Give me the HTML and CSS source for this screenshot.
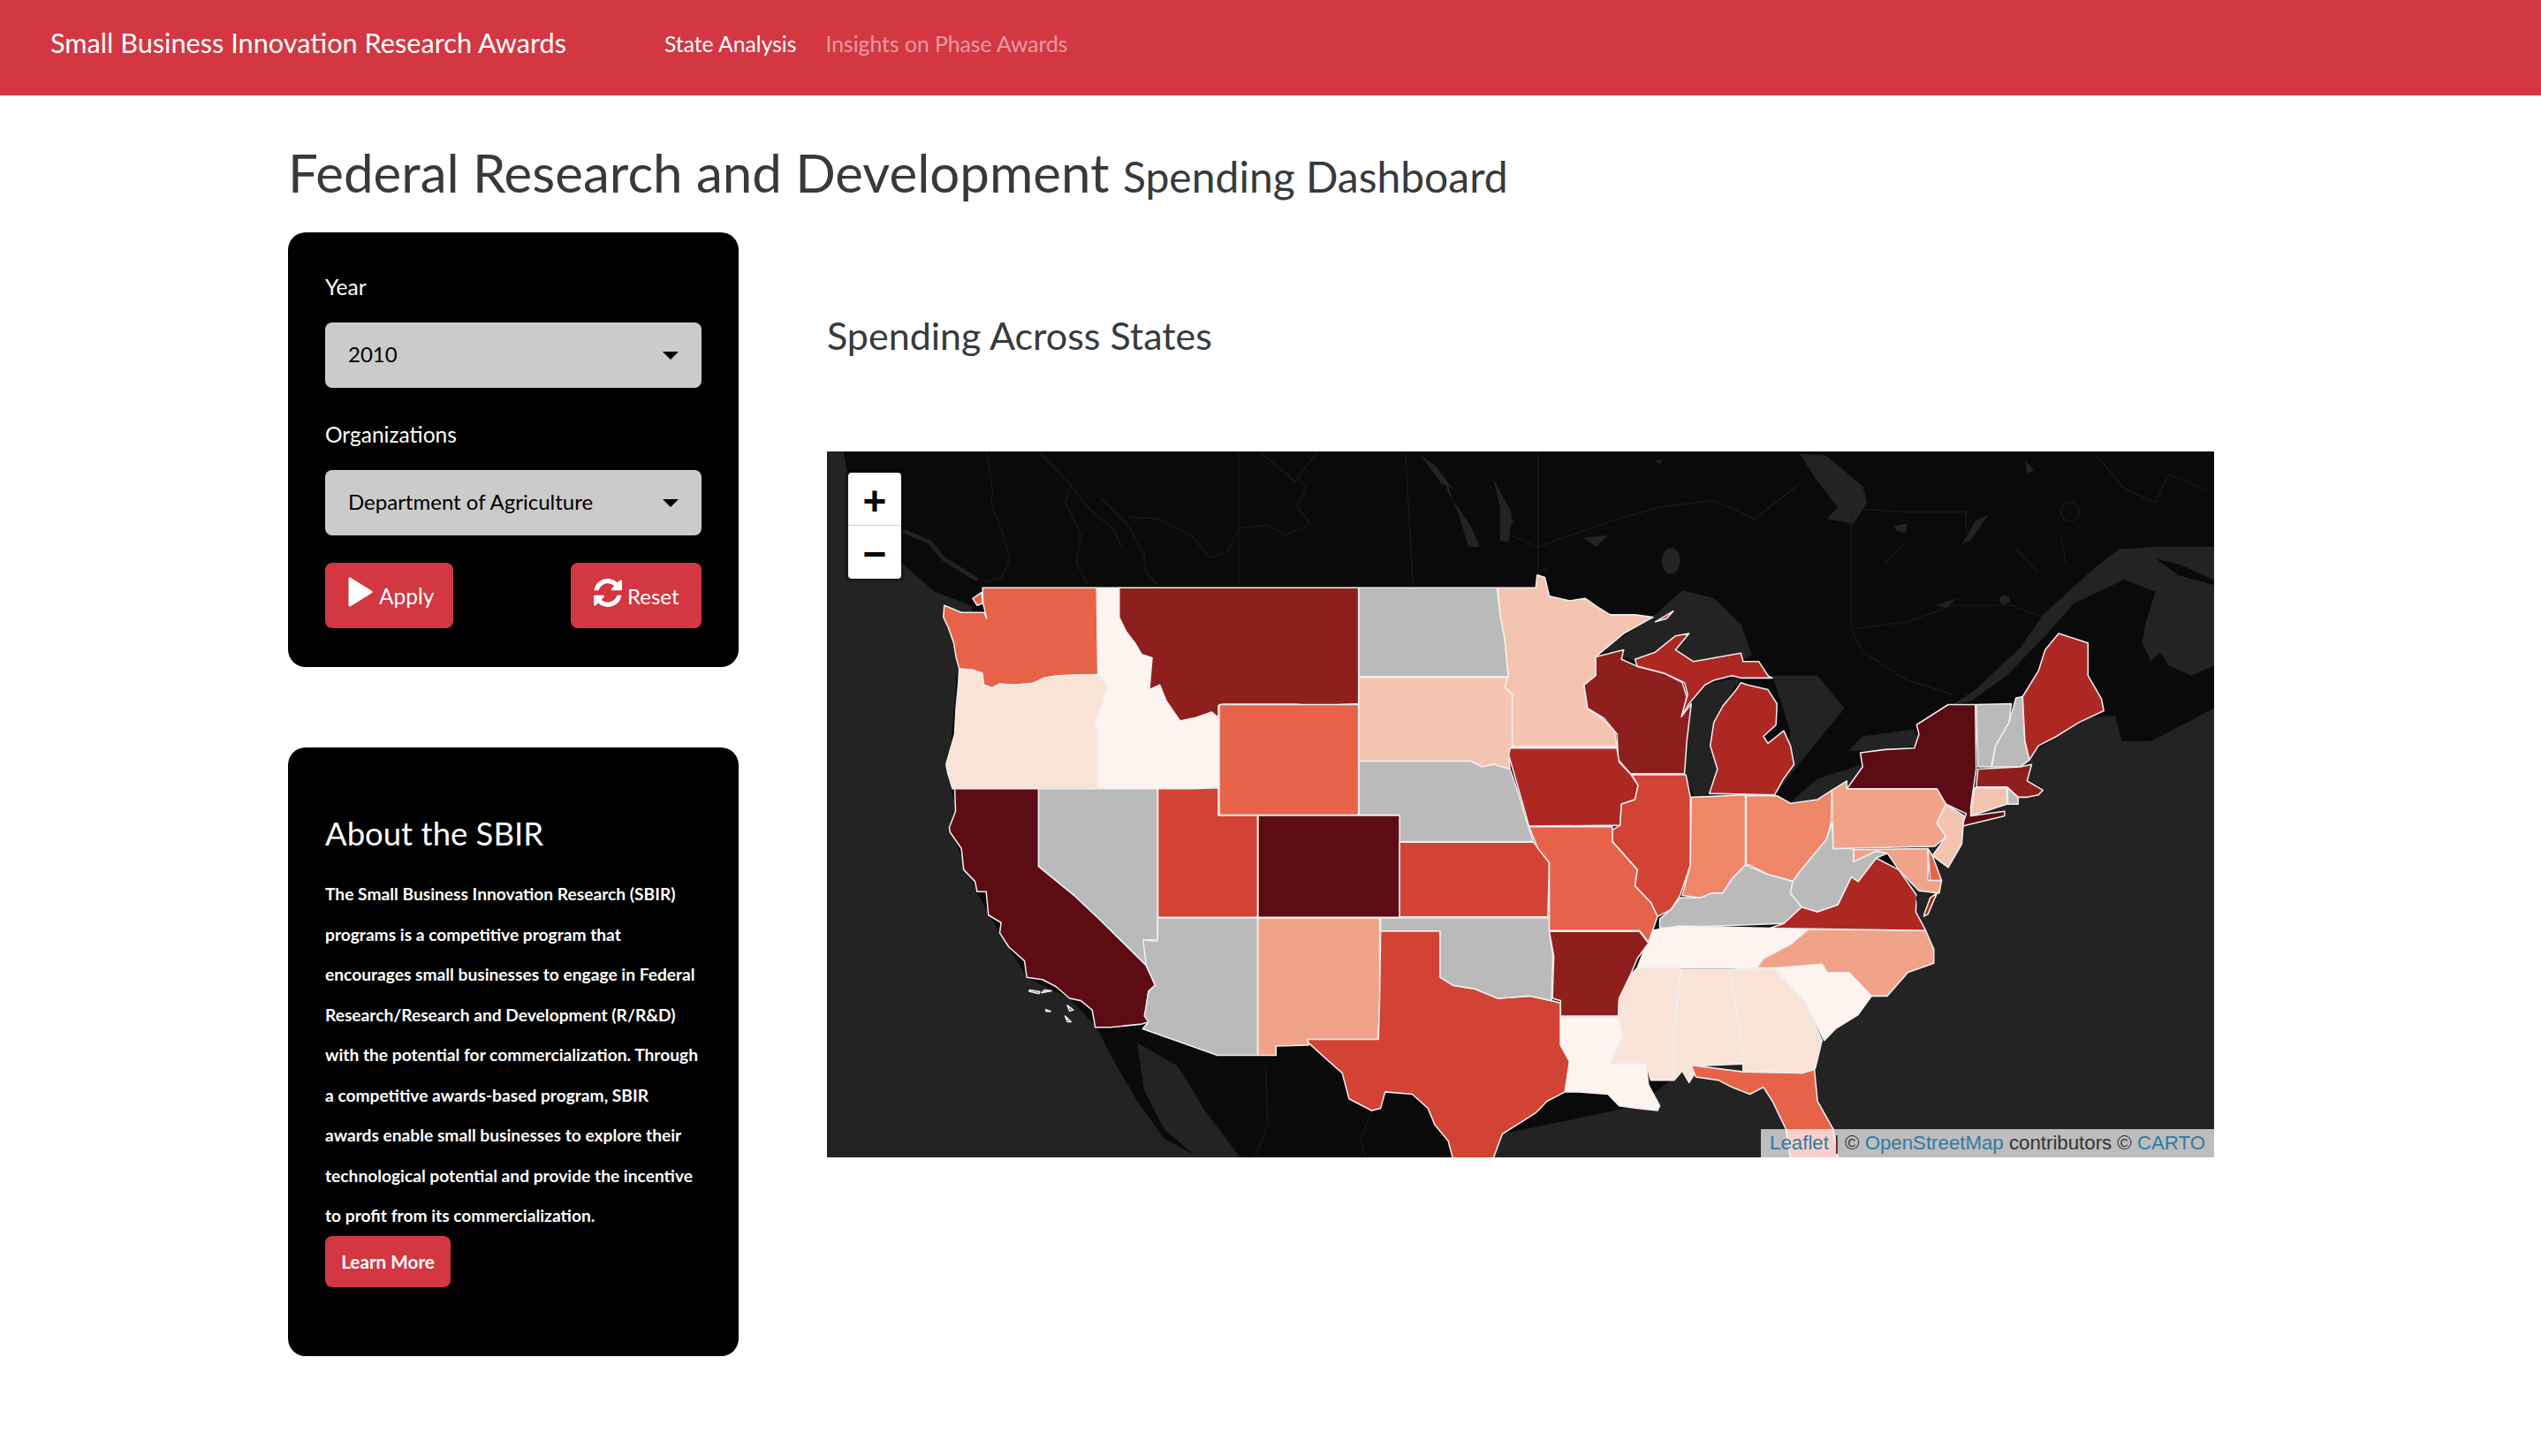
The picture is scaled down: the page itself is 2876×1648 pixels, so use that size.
FILE: index.html
```html
<!DOCTYPE html>
<html lang="en">
<head>
    <meta charset="UTF-8">
    <meta name="viewport" content="width=device-width, initial-scale=1.0">
    <title>Small Business Innovation Research Awards</title>
    <link rel="stylesheet" href="styles.css">
</head>
<body>
    <nav class="navbar">
        <a class="brand" href="#">Small Business Innovation Research Awards</a>
        <a class="nav-link active" href="#">State Analysis</a>
        <a class="nav-link" href="#">Insights on Phase Awards</a>
    </nav>

    <div class="page">
        <h1 class="page-title">Federal Research and Development <small>Spending Dashboard</small></h1>

        <div class="layout">
            <aside class="sidebar">
                <form class="card filters">
                    <label class="field-label" for="year">Year</label>
                    <div class="select-wrap">
                        <select id="year" class="select"><option>2010</option></select>
                    </div>
                    <label class="field-label org-label" for="org">Organizations</label>
                    <div class="select-wrap">
                        <select id="org" class="select"><option>Department of Agriculture</option></select>
                    </div>
                    <div class="actions">
                        <button type="button" class="btn btn-apply">
                            <svg class="icon-play" viewBox="0 0 28 34"><path d="M2 2 L26 17 L2 32 Z"/></svg>
                            Apply
                        </button>
                        <button type="button" class="btn btn-reset">
                            <svg class="icon-refresh" viewBox="128 128 1536 1536"><path d="M1639 1056q0 5-1 7-64 268-268 434.5t-478 166.5q-146 0-282.5-55t-243.5-157l-129 129q-19 19-45 19t-45-19-19-45v-448q0-26 19-45t45-19h448q26 0 45 19t19 45-19 45l-137 137q71 66 161 102t187 36q134 0 250-65t186-179q11-17 53-117 8-23 30-23h192q13 0 22.5 9.5t9.5 22.5zm25-800v448q0 26-19 45t-45 19h-448q-26 0-45-19t-19-45 19-45l138-138q-148-137-349-137-134 0-250 65t-186 179q-11 17-53 117-8 23-30 23h-199q-13 0-22.5-9.5t-9.5-22.5v-7q65-268 270-434.5t480-166.5q146 0 284 55.5t245 156.5l130-129q19-19 45-19t45 19 19 45z"/></svg>
                            Reset
                        </button>
                    </div>
                </form>

                <section class="card about">
                    <h3 class="about-title">About the SBIR</h3>
                    <p class="about-text">The Small Business Innovation Research (SBIR)<br>programs is a competitive program that<br>encourages small businesses to engage in Federal<br>Research/Research and Development (R/R&amp;D)<br>with the potential for commercialization. Through<br>a competitive awards-based program, SBIR<br>awards enable small businesses to explore their<br>technological potential and provide the incentive<br>to profit from its commercialization.</p>
                    <a class="btn btn-more" href="#">Learn More</a>
                </section>
            </aside>

            <main class="main">
                <h2 class="section-title">Spending Across States</h2>

                <div class="map">
                    <svg class="map-svg" viewBox="0 0 1570 799" width="1570" height="799">
                        <!-- basemap, west half -->
                        <g transform="translate(-6,-11) scale(.5102,.5294)">
                            <path class="water" d="M12 20 L48 20 L60 80 L60 295 L180 262 L250 320 L335 352 L300 500 L280 720 L300 790 L285 830 L345 965 L395 1050 L455 1145 L550 1190 L610 1252 L640 1310 L700 1410 L760 1490 L840 1532 L12 1532 Z"/>
                            <path class="water" d="M700 1285 L790 1335 L850 1430 L930 1532 L835 1532 L760 1470 L715 1385 Z"/>
                            <path class="water-line" d="M180 190 L240 215 L270 250 L345 295"/>
                            <path class="water" d="M1375 60 L1390 110 L1440 180 L1460 225 L1435 225 L1415 160 Z M1490 80 L1530 150 L1525 215 L1505 210 L1505 140 Z"/>
                            <path class="water" d="M1330 30 L1360 50 L1400 100 L1375 90 Z"/>
                            <path class="line" d="M365 20 L380 110 L375 130 L400 190 L417 250 L400 290 L360 300"/>
                            <path class="line" d="M480 20 L550 90 L590 140 L650 190 L665 225"/>
                            <path class="line" d="M550 100 L540 130 L575 200 L565 260 L590 305"/>
                            <path class="line" d="M620 120 L680 180 L715 240 L720 280 L745 305"/>
                            <path class="line" d="M925 20 L925 310"/>
                            <path class="line" d="M1295 20 L1312 310"/>
                            <path class="line" d="M970 20 L1050 85 L1100 20"/>
                            <path class="line" d="M680 160 L745 165 L820 200 L860 248 L900 235 L925 185 L990 178 L1030 200 L1085 175 L1055 140 L1075 100 L1060 80"/>
                            <path class="line" d="M985 1340 L990 1460 L960 1532"/>
                            <path class="line" d="M1195 1490 L1222 1430"/>
                            <path class="line" d="M1195 1490 L1208 1532"/>
                        </g>

                        <!-- basemap, east half -->
                        <g transform="translate(764,-11) scale(.5102,.5294)">
                            <path class="water" d="M-20 1532 L0 1480 L300 1420 L600 1200 L1000 800 L1150 680 L1300 590 L1360 585 L1375 640 L1440 640 L1600 560 L1600 1540 L-20 1540 Z"/>
                            <path class="water" d="M1600 225 L1440 225 L1370 230 L1320 265 L1200 370 L1150 440 L1050 530 L1000 562 L1040 555 L1120 500 L1210 410 L1270 345 L1380 295 L1450 320 L1430 380 L1420 430 L1440 470 L1460 450 L1480 480 L1530 500 L1600 470 Z"/>
                            <path class="land" d="M1450 250 L1510 265 L1600 305 L1600 312 L1500 285 Z"/>
                            <path class="water" d="M225 445 L340 370 L400 318 L470 335 L530 390 L555 455 L530 470 L300 470 Z"/>
                            <path class="water" d="M420 560 L450 520 L490 510 L530 505 L490 565 L470 600 L462 650 L478 700 L460 752 L430 762 L408 720 L405 650 L415 590 Z"/>
                            <path class="water" d="M600 500 L700 500 L760 570 L700 640 L650 700 L610 750 L640 620 Z"/>
                            <path class="water" d="M640 770 L700 720 L800 690 L780 730 L700 770 Z"/>
                            <path class="water" d="M770 660 L800 630 L915 615 L925 650 L850 660 Z"/>
                            <path class="water" d="M660 25 L720 30 L800 95 L810 130 L780 175 L720 165 L745 140 L700 85 Z"/>
                            <ellipse class="water" cx="375" cy="255" rx="20" ry="28"/>
                            <ellipse class="water" cx="1115" cy="338" rx="12" ry="10"/>
                            <path class="water" d="M0 120 L25 170 L0 215 Z"/>
                            <path class="water" d="M1020 220 L1050 170 L1080 155 L1040 210 Z"/>
                            <path class="water" d="M870 180 L900 175 L895 195 L875 190 Z M180 205 L235 200 L210 225 Z M960 350 L1010 335 L985 355 Z M340 40 L358 38 L350 48 Z M1160 40 L1180 60 L1165 70 Z"/>
                            <path class="line" d="M80 20 L80 280 L100 270"/>
                            <path class="line" d="M775 140 L775 400 L800 450 L900 510 L1000 540"/>
                            <path class="line" d="M20 200 L80 225 L240 170 L350 140 L470 125 L560 165 L660 90"/>
                            <path class="line" d="M805 145 L900 150 L1030 150 L1030 195"/>
                            <path class="line" d="M780 400 L900 385 L1000 350 L1130 350 L1200 375"/>
                            <circle class="line" cx="1260" cy="150" r="20"/>
                            <path class="line" d="M1320 30 L1380 100 L1450 130 L1480 70 L1568 105"/>
                            <path class="line" d="M1240 200 L1250 260 M850 260 L890 220 M1140 230 L1190 280"/>
                        </g>

                        <!-- states, west half -->
                        <g transform="translate(-6,-11) scale(.5102,.5294)">
                            <polygon class="state r6" points="357,312 610,312 613,498 525,500 495,505 470,516 430,520 395,518 378,526 360,520 356,495 335,488 305,485 298,460 293,430 280,395 270,375 272,350 310,365 360,365 366,378 358,345"/>
                            <polygon class="state r6" points="335,335 355,322 357,345 345,350"/>
                            <polygon class="state r2" points="305,487 335,488 356,495 360,522 378,527 395,518 430,520 470,516 495,505 525,500 613,498 635,520 622,565 604,600 612,620 612,738 600,742 290,742 280,710 276,690 295,625 298,570 303,520"/>
                            <polygon class="state r1" points="611,312 660,312 660,375 675,405 695,430 710,455 733,462 727,520 750,520 765,555 795,595 830,590 865,578 882,595 882,740 825,742 612,742 612,620 604,600 622,565 635,520 613,498"/>
                            <polygon class="state r9" points="660,312 1191,312 1191,560 1100,565 1050,561 890,561 880,565 880,590 865,578 830,590 795,597 765,555 750,520 727,530 733,462 710,455 695,430 675,405 660,375"/>
                            <polygon class="state r6" points="882,562 1191,562 1191,798 882,798"/>
                            <polygon class="state na" points="1192,312 1498,312 1505,370 1515,420 1523,502 1192,502"/>
                            <polygon class="state r3" points="1192,504 1523,504 1515,525 1532,540 1532,650 1525,680 1527,700 1490,690 1465,695 1440,683 1192,683"/>
                            <polygon class="state na" points="1192,683 1440,683 1465,695 1490,690 1527,700 1545,750 1560,800 1579,855 1282,855 1282,798 1192,798"/>
                            <polygon class="state r10" points="968,799 1282,799 1282,1017 968,1017"/>
                            <polygon class="state r7" points="746,742 825,742 880,740 880,799 967,799 967,1017 746,1017"/>
                            <polygon class="state na" points="481,742 745,742 745,1065 715,1065 720,1120 615,1020 560,970 481,908"/>
                            <polygon class="state r10" points="295,742 481,742 481,908 560,970 615,1020 720,1120 740,1162 725,1175 718,1228 728,1240 710,1245 640,1252 607,1252 600,1215 575,1195 550,1190 520,1165 490,1150 455,1145 450,1110 415,1080 395,1050 398,1028 370,1012 365,962 345,962 340,940 315,915 310,870 285,835 283,825 297,790"/>
                            <polygon class="state r8" points="460,1175 482,1180 484,1176 462,1172"/>
                            <polygon class="state r8" points="488,1178 510,1174 495,1172"/>
                            <polygon class="state r8" points="497,1214 508,1218 498,1218"/>
                            <polygon class="state r8" points="545,1205 558,1215 550,1217"/>
                            <polygon class="state r8" points="540,1228 553,1240 545,1240"/>
                            <polygon class="state na" points="746,1018 967,1018 967,1312 878,1312 712,1255 725,1240 716,1228 725,1175 740,1162 720,1120 713,1065 745,1068"/>
                            <polygon class="state r4" points="968,1018 1238,1018 1238,1185 1235,1278 1078,1278 1080,1290 1008,1292 1008,1312 968,1312"/>
                            <polygon class="state r7" points="1240,1046 1372,1046 1372,1145 1400,1162 1450,1170 1500,1190 1570,1185 1619,1195 1639,1200 1639,1290 1659,1325 1649,1390 1609,1410 1584,1435 1510,1480 1490,1532 1400,1532 1390,1495 1360,1460 1345,1425 1310,1395 1250,1390 1240,1425 1220,1430 1170,1405 1155,1350 1120,1320 1080,1285 1078,1278 1235,1278 1238,1185"/>
                            <polygon class="state na" points="1240,1018 1614,1018 1614,1046 1622,1100 1619,1195 1570,1185 1500,1190 1450,1170 1400,1162 1372,1145 1372,1046 1240,1046"/>
                            <polygon class="state r7" points="1282,856 1579,856 1599,880 1614,900 1611,1016 1282,1016"/>
                        </g>

                        <!-- states, east half -->
                        <g transform="translate(764,-11) scale(.5102,.5294)">
                            <polygon class="state r3" points="-9,312 75,312 78,285 95,290 105,330 150,340 185,335 210,352 240,370 295,370 335,375 270,410 220,450 208,460 208,500 182,520 190,570 220,590 250,620 255,652 23,652 23,540 6,525 14,502 6,420 -4,370"/>
                            <polygon class="state r9" points="208,460 270,445 265,465 300,480 360,495 400,515 410,545 400,585 420,560 410,640 405,710 285,710 258,680 255,625 225,590 190,570 182,520 208,500"/>
                            <polygon class="state r8" points="295,465 340,450 385,415 415,410 385,445 425,470 530,452 535,470 570,470 590,500 600,505 530,505 510,500 470,510 450,520 415,560 398,588 412,540 405,515 360,495 300,480"/>
                            <polygon class="state r8" points="530,515 545,520 590,530 610,560 608,605 580,630 590,645 625,618 640,650 648,690 625,720 605,755 460,752 478,700 462,650 470,600 490,565 520,530"/>
                            <polygon class="state r8" points="340,385 380,362 365,378"/>
                            <polygon class="state r8" points="18,655 255,655 260,685 285,710 302,735 295,765 265,775 262,820 60,822 45,770 30,720 15,670"/>
                            <polygon class="state r7" points="288,712 408,712 418,760 418,905 395,970 375,1000 345,1015 330,985 295,950 300,915 245,855 245,830 262,820 265,775 295,765 302,735"/>
                            <polygon class="state r5" points="420,760 540,755 540,905 510,935 490,965 465,965 440,975 400,970 418,905"/>
                            <polygon class="state r5" points="542,757 610,757 640,773 700,765 732,745 730,815 720,850 690,885 660,920 645,940 590,925 550,905 542,905"/>
                            <polygon class="state na" points="540,905 590,925 645,940 640,965 665,995 625,1030 350,1040 350,1020 375,1000 395,975 440,975 465,965 490,965 510,935"/>
                            <polygon class="state r1" points="330,1045 395,1035 680,1042 640,1075 580,1105 565,1125 300,1125 320,1075"/>
                            <polygon class="state r6" points="60,823 245,823 245,855 300,915 295,950 330,985 345,1015 325,1070 305,1045 105,1045 105,900 80,870"/>
                            <polygon class="state r9" points="105,1047 305,1047 325,1072 300,1105 285,1140 260,1190 258,1228 130,1228 130,1195 112,1190 115,1100"/>
                            <polygon class="state r1" points="130,1230 260,1230 268,1270 240,1330 320,1330 325,1375 350,1420 345,1430 300,1425 260,1420 235,1395 170,1390 140,1390 150,1325 130,1290"/>
                            <polygon class="state r2" points="300,1125 396,1125 380,1280 380,1365 330,1365 320,1330 240,1330 268,1270 258,1228 260,1190 285,1140"/>
                            <polygon class="state r2" points="398,1128 506,1128 530,1270 535,1330 420,1335 428,1350 415,1370 400,1345 382,1365 380,1280"/>
                            <polygon class="state r2" points="507,1128 605,1125 640,1165 670,1195 710,1280 695,1340 665,1350 535,1345 530,1270"/>
                            <polygon class="state r6" points="420,1333 535,1347 665,1350 693,1342 700,1410 735,1470 745,1532 640,1532 630,1470 600,1410 580,1380 550,1395 510,1380 480,1365 430,1358"/>
                            <polygon class="state r1" points="605,1125 710,1117 722,1135 770,1135 820,1185 790,1225 740,1255 715,1280 670,1195 640,1165"/>
                            <polygon class="state r4" points="565,1125 580,1105 640,1075 680,1042 940,1045 958,1085 958,1115 900,1135 855,1185 820,1185 770,1135 722,1135 710,1117 605,1125"/>
                            <polygon class="state r8" points="595,1040 625,1030 665,995 700,1005 745,990 775,930 790,940 830,890 880,915 920,970 918,1005 940,1045"/>
                            <polygon class="state r8" points="935,1015 950,975 965,965 945,1010"/>
                            <polygon class="state na" points="640,965 645,940 660,920 690,885 720,850 732,815 735,870 780,870 780,898 830,875 855,880 830,890 790,940 775,930 745,990 700,1005 665,995"/>
                            <polygon class="state r4" points="732,745 765,725 765,742 965,742 985,775 965,815 985,845 960,865 735,870"/>
                            <polygon class="state r10" points="765,742 800,695 795,665 850,658 915,655 925,625 920,605 990,562 1050,562 1052,700 1040,780 1040,800 1115,790 1115,800 1020,822 1030,795 985,775 965,742"/>
                            <polygon class="state r3" points="985,775 1025,800 1020,860 990,910 955,885 985,845 965,815"/>
                            <polygon class="state r4" points="780,872 945,870 945,938 975,938 970,965 925,960 880,915 855,880 830,875 780,898"/>
                            <polygon class="state r6" points="945,870 955,885 975,938 950,938"/>
                            <polygon class="state na" points="1052,562 1130,560 1125,600 1095,650 1085,695 1056,695"/>
                            <polygon class="state na" points="1140,548 1155,545 1160,640 1170,680 1150,695 1087,695 1095,650 1125,600"/>
                            <polygon class="state r8" points="1155,545 1190,490 1205,445 1235,410 1300,430 1300,500 1330,550 1335,575 1280,600 1230,630 1190,650 1170,680 1160,640"/>
                            <polygon class="state r9" points="1056,700 1150,695 1175,690 1165,725 1200,745 1190,755 1165,760 1145,760 1120,738 1052,738"/>
                            <polygon class="state r3" points="1048,740 1120,740 1120,775 1040,800"/>
                            <polygon class="state na" points="1122,740 1145,760 1145,775 1122,775"/>
                            <path class="water" d="M925 960 L935 1015 L928 1020 L918 975 Z M960 890 L985 915 L975 925 L965 905 Z"/>
                        </g>
                    </svg>

                    <div class="zoom-control">
                        <a class="zoom-btn" href="#">+</a>
                        <a class="zoom-btn" href="#">&minus;</a>
                    </div>

                    <div class="attribution"><a href="#">Leaflet</a> | &copy; <a href="#">OpenStreetMap</a> contributors &copy; <a href="#">CARTO</a></div>
                </div>
            </main>
        </div>
    </div>
</body>
</html>
```

FILE: styles.css
```css
* {
    box-sizing: border-box;
}
body {
    margin: 0;
    font-family: Lato, "Noto Sans", sans-serif;
    color: #373a3c;
    background: #fff;
}
a {
    text-decoration: none;
}

/* navbar */
.navbar {
    display: flex;
    align-items: flex-start;
    height: 108px;
    padding: 30px 0 0 57px;
    background-color: #d23742;
}
.brand {
    width: 695px;
    color: #fff;
    font-size: 30.7px;
    line-height: 38px;
}
.nav-link {
    margin-right: 33px;
    color: rgba(255,255,255,0.5);
    font-size: 24.7px;
    line-height: 40px;
}
.nav-link.active {
    color: #fff;
}

/* page */
.page {
    padding: 51px 0 112px 326px;
}
.page-title {
    margin: 0 0 27px;
    font-size: 60px;
    font-weight: 400;
    line-height: 72px;
}
.page-title small {
    font-size: 48px;
}
.layout {
    display: flex;
    align-items: flex-start;
    gap: 100px;
}
.sidebar {
    display: flex;
    flex-direction: column;
    gap: 91px;
    width: 510px;
}
.card {
    padding: 42px;
    border-radius: 20px;
    background: #000;
    color: #fff;
}

/* filters */
.filters {
    height: 492px;
}
.field-label {
    display: block;
    height: 60px;
    font-size: 24.5px;
    line-height: 40px;
}
.org-label {
    margin-top: 33px;
}
.select-wrap {
    position: relative;
}
.select-wrap::after {
    content: "";
    position: absolute;
    top: 33px;
    right: 26px;
    border-top: 9px solid #000;
    border-left: 9px solid transparent;
    border-right: 9px solid transparent;
}
.select {
    display: block;
    width: 100%;
    height: 74px;
    padding: 0 26px 4px;
    border: 0;
    border-radius: 8px;
    background: #cbcbcb;
    color: #000;
    font-family: inherit;
    font-size: 24px;
    appearance: none;
}
.actions {
    display: flex;
    justify-content: space-between;
    margin-top: 31px;
}
.btn {
    display: inline-flex;
    align-items: center;
    border: 0;
    border-radius: 8px;
    background: #d23742;
    color: #fff;
    font-family: inherit;
}
.btn-apply {
    gap: 7px;
    width: 145px;
    height: 74px;
    padding: 0 0 0 26px;
    font-size: 24.5px;
}
.btn-reset {
    gap: 6px;
    width: 148px;
    height: 74px;
    padding: 0 0 0 26px;
    font-size: 24px;
}
.icon-play {
    width: 28px;
    height: 34px;
    margin-top: -8px;
    fill: #fff;
    stroke: #fff;
    stroke-width: 3;
    stroke-linejoin: round;
}
.icon-refresh {
    width: 32px;
    height: 32px;
    margin-top: -6px;
    fill: #fff;
}

/* about */
.about {
    height: 689px;
    padding-top: 73px;
}
.about-title {
    margin: 0 0 22px;
    font-size: 36.5px;
    font-weight: 400;
    line-height: 48px;
}
.about-text {
    margin: 0;
    font-size: 19.2px;
    font-weight: 700;
    line-height: 45.5px;
    white-space: nowrap;
}
.btn-more {
    justify-content: center;
    width: 142px;
    height: 58px;
    font-size: 20.7px;
    font-weight: 700;
}

/* map */
.main {
    width: 1570px;
}
.section-title {
    margin: 92px 0 106px;
    font-size: 43px;
    font-weight: 400;
    line-height: 50px;
}
.map {
    position: relative;
    width: 1570px;
    height: 799px;
    overflow: hidden;
    background: #0a0a0a;
}
.map-svg {
    display: block;
}
.water {
    fill: #232323;
}
.land {
    fill: #0a0a0a;
}
.water-line {
    fill: none;
    stroke: #232323;
    stroke-width: 9;
}
.line {
    fill: none;
    stroke: #1d1d1d;
    stroke-width: 2;
}
.state {
    stroke: #eee;
    stroke-width: 3;
    stroke-linejoin: round;
}
.r1 { fill: #fef4ef; }
.r2 { fill: #f9e3d7; }
.r3 { fill: #f4c4b0; }
.r4 { fill: #f0a388; }
.r5 { fill: #ee8668; }
.r6 { fill: #e6634a; }
.r7 { fill: #d24235; }
.r8 { fill: #ae2823; }
.r9 { fill: #8f1f1c; }
.r10 { fill: #5d0c14; }
.na { fill: #bababa; }

.zoom-control {
    position: absolute;
    top: 20px;
    left: 20px;
    border: 4px solid rgba(0,0,0,0.2);
    border-radius: 8px;
    background-clip: padding-box;
}
.zoom-btn {
    display: block;
    width: 60px;
    height: 60px;
    background: #fff;
    color: #000;
    font-family: "Liberation Sans", sans-serif;
    font-size: 46px;
    font-weight: 700;
    line-height: 64px;
    text-align: center;
}
.zoom-btn:first-child {
    border-bottom: 1px solid #ccc;
    border-radius: 4px 4px 0 0;
}
.zoom-btn:last-child {
    border-radius: 0 0 4px 4px;
}
.attribution {
    position: absolute;
    right: 0;
    bottom: 0;
    padding: 0 10px;
    background: rgba(255,255,255,0.7);
    color: #333;
    font-family: "Liberation Sans", sans-serif;
    font-size: 22.25px;
    line-height: 32px;
}
.attribution a {
    color: #2f7aa6;
}
```
